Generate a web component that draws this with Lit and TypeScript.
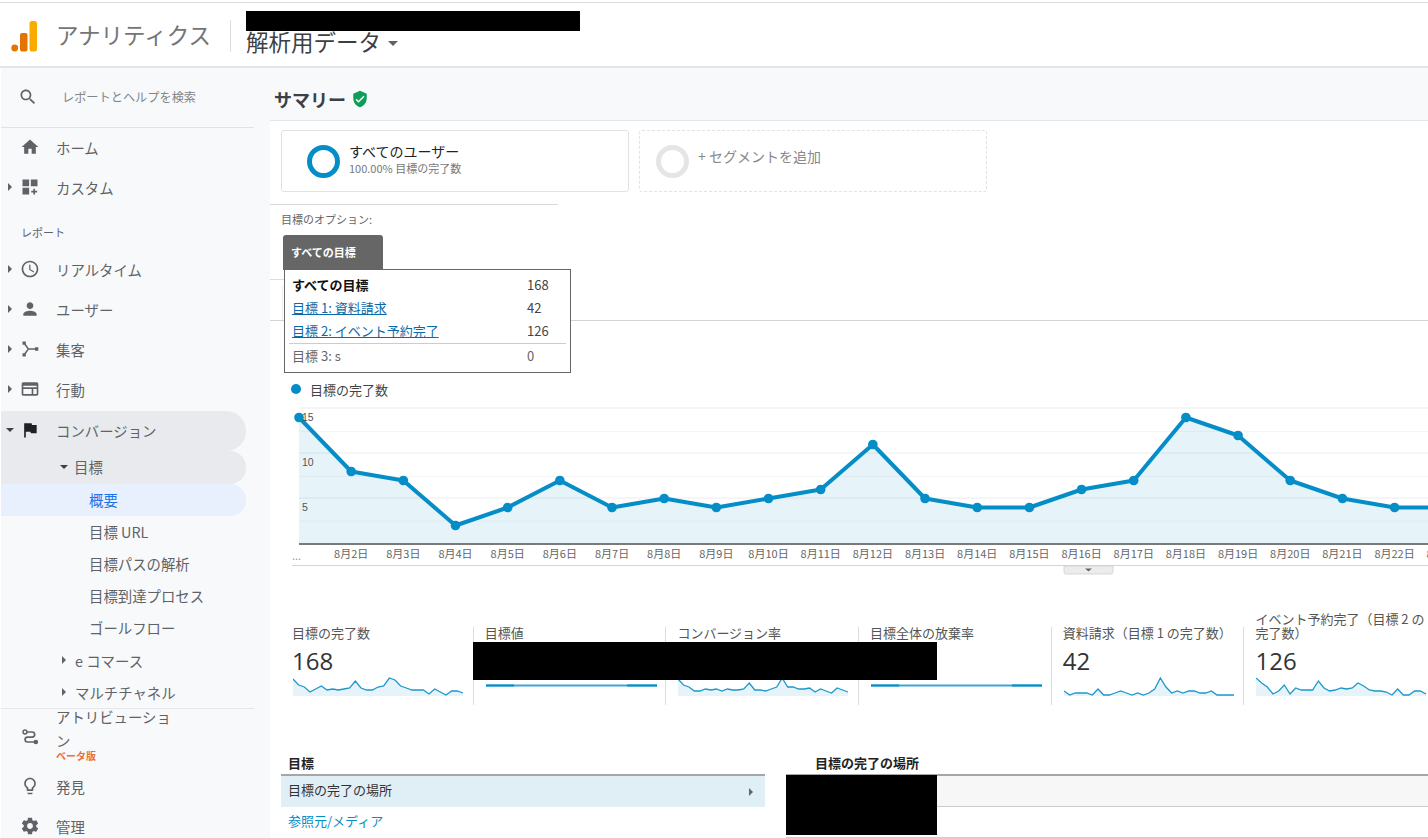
import { LitElement, html, css, svg } from "lit";
import { customElement } from "lit/decorators.js";

const P = {
  search: "M15.5 14h-.79l-.28-.27C15.41 12.59 16 11.11 16 9.5 16 5.91 13.09 3 9.5 3S3 5.91 3 9.5 5.91 16 9.5 16c1.61 0 3.09-.59 4.23-1.57l.27.28v.79l5 4.99L20.49 19l-4.99-5zm-6 0C7.01 14 5 11.99 5 9.5S7.01 5 9.5 5 14 7.01 14 9.5 11.99 14 9.5 14z",
  home: "M10 20v-6h4v6h5v-8h3L12 3 2 12h3v8z",
  custom: "M3 3h8v8H3zM13 3h8v8h-8zM3 13h8v8H3zM16 14h2v2.5h2.5v2H18V21h-2v-2.500h-2.500v-2H16z",
  clock: "M11.99 2C6.47 2 2 6.48 2 12s4.47 10 9.99 10C17.52 22 22 17.52 22 12S17.52 2 11.99 2zM12 20c-4.420 0-8-3.580-8-8s3.580-8 8-8 8 3.580 8 8-3.580 8-8 8zm.5-13H11v6l5.250 3.150.75-1.230-4.500-2.670z",
  person: "M12 12c2.210 0 4-1.790 4-4s-1.790-4-4-4-4 1.790-4 4 1.790 4 4 4zm0 2c-2.670 0-8 1.340-8 4v2h16v-2c0-2.660-5.330-4-8-4z",
  acq: "M3 3h4v4H3zM3 17h4v4H3zM18 10h4v4h-4zM6.500 5.500l4 5.500H18v2h-7.500l-4 5.500-1.600-1.200L9 12 4.900 6.700z",
  behav: "M20 4H4c-1.100 0-2 .9-2 2v12c0 1.100.9 2 2 2h16c1.100 0 2-.9 2-2V6c0-1.100-.9-2-2-2zM4 18v-6h10v6H4zm16 0h-4v-6h4v6zM4 10V8h16v2H4z",
  flag: "M14.400 6L14 4H5v17h2v-7h5.600l.4 2h7V6z",
  bulb: "M9 21c0 .55.45 1 1 1h4c.55 0 1-.45 1-1v-1H9v1zm3-19C8.140 2 5 5.140 5 9c0 2.380 1.190 4.470 3 5.740V17c0 .55.45 1 1 1h6c.55 0 1-.45 1-1v-2.260c1.810-1.270 3-3.360 3-5.740 0-3.860-3.140-7-7-7zm2.850 11.100l-.85.6V16h-4v-2.300l-.85-.6C7.800 12.160 7 10.630 7 9c0-2.760 2.240-5 5-5s5 2.240 5 5c0 1.630-.8 3.160-2.150 4.100z",
  gear: "M19.430 12.980c.04-.32.07-.64.07-.98s-.03-.66-.07-.98l2.110-1.650c.19-.15.24-.42.12-.64l-2-3.460c-.12-.22-.39-.3-.61-.22l-2.490 1c-.52-.4-1.080-.73-1.690-.98l-.38-2.650C14.460 2.180 14.250 2 14 2h-4c-.25 0-.46.18-.49.42l-.38 2.650c-.61.25-1.170.59-1.690.98l-2.490-1c-.23-.09-.49 0-.61.22l-2 3.460c-.13.22-.07.49.12.64l2.110 1.650c-.04.32-.07.65-.07.98s.03.66.07.98l-2.110 1.650c-.19.15-.24.42-.12.64l2 3.460c.12.22.39.3.61.22l2.490-1c.52.4 1.080.73 1.690.98l.38 2.650c.03.24.24.42.49.42h4c.25 0 .46-.18.49-.42l.38-2.650c.61-.25 1.170-.59 1.690-.98l2.490 1c.23.09.49 0 .61-.22l2-3.460c.12-.22.07-.49-.12-.64l-2.110-1.650zM12 15.500c-1.930 0-3.500-1.570-3.500-3.500s1.570-3.500 3.500-3.500 3.500 1.570 3.500 3.500-1.570 3.500-3.500 3.500z",
  shield: "M12 1L3 5v6c0 5.550 3.840 10.740 9 12 5.160-1.260 9-6.450 9-12V5l-9-4zm-2 16l-4-4 1.410-1.410L10 14.170l6.590-6.590L18 9l-8 8z",
};

const icon = (d: string, cls = "ic") => html`<svg class=${cls} viewBox="0 0 24 24"><path d=${d}></path></svg>`;

const attributionIcon = html`<svg class="ic" viewBox="0 0 24 24"><circle cx="6" cy="6" r="2.300" fill="none" stroke="#5f6368" stroke-width="1.800"></circle><circle cx="19" cy="18" r="2.800"></circle><path d="M8.500 6h6a3 3 0 0 1 0 6.200H9a2.900 2.900 0 0 0 0 5.800h8" fill="none" stroke="#5f6368" stroke-width="2"></path></svg>`;

const caretRight = html`<span class="caret right"></span>`;
const caretDown = html`<span class="caret down"></span>`;

const MAIN = [14, 8, 7, 2, 4, 7, 4, 5, 4, 5, 6, 11, 5, 4, 4, 6, 7, 14, 12, 7, 5, 4, 4, 4];
const X0 = 29, STEP = 52.17, BASE = 143.5, UNIT = 9;
const px = (i: number) => X0 + i * STEP;
const py = (v: number) => BASE - v * UNIT;

function mainChart() {
  const pts = MAIN.map((v, i) => `${px(i)},${py(v)}`).join(" ");
  const grid = [8, 31.5, 53, 76.5, 98, 121];
  return html`<svg class="chart" viewBox="0 0 1158 176" width="1158" height="176">
    ${grid.map((y, i) => svg`<line x1="29" x2="1158" y1=${y} y2=${y} stroke=${i % 2 ? "#f6f6f6" : "#ececec"} stroke-width="1"></line>`)}
    <polygon points="${X0},${BASE} ${pts} ${px(23)},${BASE}" fill="#058dc7" fill-opacity="0.1"></polygon>
    <polyline points=${pts} fill="none" stroke="#058dc7" stroke-width="4" stroke-linejoin="round"></polyline>
    ${MAIN.map((v, i) => svg`<circle cx=${px(i)} cy=${py(v)} r="4.800" fill="#058dc7"></circle>`)}
    <rect x="29" y="143" width="1129" height="2" fill="#7a7a7a"></rect>
    <text class="yl" x="32" y="21">15</text>
    <text class="yl" x="32" y="66">10</text>
    <text class="yl" x="32" y="111">5</text>
    <text class="xl dots" x="22" y="160">...</text>
    ${MAIN.slice(1).map((_, i) => svg`<text class="xl" x=${px(i + 1)} y="158" text-anchor="middle">8月${i + 2}日</text>`)}
    <rect x="22" y="165" width="1136" height="1" fill="#d5d5d5"></rect>
    <path d="M794 166h49v6a2 2 0 0 1-2 2h-45a2 2 0 0 1-2-2z" fill="#ececec" stroke="#cfcfcf" stroke-width="0.800"></path>
    <path d="M815 168.500h7l-3.500 3z" fill="#666"></path>
  </svg>`;
}

function spark(ys: number[] | null) {
  if (!ys) {
    return html`<svg class="spark" viewBox="0 0 171 20" width="171" height="20">
      <line x1="0" x2="171" y1="8.500" y2="8.500" stroke="#3fa4d8" stroke-width="2"></line>
      <line x1="0" x2="28" y1="8.500" y2="8.500" stroke="#058dc7" stroke-width="2"></line>
      <line x1="141" x2="171" y1="8.500" y2="8.500" stroke="#058dc7" stroke-width="2"></line>
    </svg>`;
  }
  const d = ys.map((y, i) => `${(i * 170) / (ys.length - 1)},${y + 1}`).join(" ");
  return html`<svg class="spark" viewBox="0 0 171 20" width="171" height="20">
    <polygon points="0,19 ${d} 170,19" fill="#058dc7" fill-opacity="0.1"></polygon>
    <polyline points=${d} fill="none" stroke="#058dc7" stroke-opacity="0.9" stroke-width="1.300"></polyline>
  </svg>`;
}

const S1 = [1, 7, 9, 14, 11, 8, 12, 11, 12, 11, 10, 3, 10, 12, 12, 9, 8, 0, 2, 8, 10, 12, 12, 12, 16, 11, 14, 17, 13, 13, 15];
const S3 = [1, 7, 9, 13, 13, 11, 12, 11, 13, 11, 12, 12, 11, 5, 12, 12, 13, 11, 9, 0, 9, 9, 11, 11, 10, 14, 11, 13, 15, 10, 12, 14];
const S5 = [13, 17, 15, 15, 15, 17, 11, 17, 17, 15, 13, 15, 17, 15, 17, 15, 11, 0, 9, 15, 13, 15, 13, 13, 15, 15, 13, 17, 17, 17, 17];
const S6 = [0, 5, 9, 16, 13, 7, 16, 10, 12, 12, 12, 3, 10, 13, 12, 10, 11, 10, 5, 8, 12, 13, 13, 14, 17, 11, 17, 17, 13, 13, 16];

const CARDS: { title: string; value?: string; ys: number[] | null }[] = [
  { title: "目標の完了数", value: "168", ys: S1 },
  { title: "目標値", ys: null },
  { title: "コンバージョン率", ys: S3 },
  { title: "目標全体の放棄率", ys: null },
  { title: "資料請求（目標 1 の完了数）", value: "42", ys: S5 },
  { title: "イベント予約完了（目標 2 の完了数）", value: "126", ys: S6 },
];

@customElement("app-root")
export class AppRoot extends LitElement {
  static styles = css`
    :host {
      display: block;
      width: 1428px;
      height: 838px;
      overflow: hidden;
      position: relative;
      background: #fff;
      font-family: "Noto Sans CJK JP", "Noto Sans", sans-serif;
      color: #333;
    }
    .redact { position: absolute; background: #000; }
    .r1 { left: 246px; top: 11px; width: 334px; height: 20px; }
    .r2 { left: 473px; top: 642px; width: 464px; height: 38px; }
    .r3 { left: 786px; top: 775px; width: 151px; height: 60px; }

    header {
      height: 66px;
      box-sizing: border-box;
      border-top: 1px solid #dcdcdc;
      border-bottom: 2px solid #e3e5e8;
      margin-top: 2px;
      display: flex;
      align-items: center;
      background: #fff;
    }
    .logo { width: 30px; height: 34px; margin-left: 9px; margin-top: 2px; flex: none; }
    .brand { font-size: 22.500px; color: #757575; margin-left: 17px; line-height: 30px; margin-top: -2px; width: 157px; white-space: nowrap; flex: none; }
    .vr { width: 1px; height: 32px; background: #dadce0; margin-left: 17px; margin-top: 2px; }
    .prop { font-size: 22.500px; color: #3c4043; margin-left: 15px; margin-top: 13px; line-height: 30px; display: flex; align-items: center; }
    .prop .tri { width: 0; height: 0; border: 5px solid transparent; border-top: 5px solid #5f6368; border-bottom: 0; margin-left: 7px; margin-top: 4px; }

    .body { display: flex; height: 770px; }
    aside { width: 270px; flex: none; box-sizing: border-box; border-left: 1px solid #fff; background: #f8f9fb; overflow: hidden; }
    .search { height: 60px; width: 253px; box-sizing: border-box; border-bottom: 1px solid #e0e2e5; display: flex; align-items: center; padding-left: 17px; font-size: 12.200px; color: #80868b; padding-bottom: 1px; }
    .search .ic { width: 20px; height: 20px; fill: #5f6368; margin-right: 24px; }
    .nav { display: flex; align-items: center; height: 40px; font-size: 14.400px; color: #5f6368; width: 245px; box-sizing: border-box; padding: 0 0 2px 5px; }
    .nav .cw { width: 14px; flex: none; display: flex; align-items: center; }
    .ic { width: 20px; height: 20px; fill: #5f6368; flex: none; margin-right: 16px; }
    .label { height: 42px; display: flex; align-items: center; padding-left: 20px; font-size: 11px; color: #5f6368; padding-top: 6px; box-sizing: border-box; }
    .caret { display: block; width: 0; height: 0; border-style: solid; border-color: transparent; }
    .caret.right { border-width: 4px 0 4px 4px; border-left-color: #5f6368; margin-left: 2px; }
    .caret.down { border-width: 4px 4px 0 4px; border-top-color: #3c4043; }
    .conv { background: #e8eaed; border-radius: 0 20px 20px 0; margin-top: 1px; }
    .conv .ic { fill: #202124; }
    .sub { display: flex; align-items: center; height: 32px; width: 245px; box-sizing: border-box; padding: 0 0 2px 88px; font-size: 14.400px; color: #5f6368; }
    .sub.mid { padding-left: 59px; }
    .sub.mid .caret { margin-right: 6px; }
    .sub.mid .caret.right { margin-left: 2px; margin-right: 9px; }
    .sub.goal { background: #e8eaed; border-radius: 0 16px 16px 0; height: 33px; }
    .sub.first { margin-top: 1px; }
    .sub.on { background: #e8f0fe; color: #1a73e8; border-radius: 0 16px 16px 0; }
    .rule { height: 1px; width: 253px; background: #e6e7ea; margin-top: -1px; }
    .nav.attr { height: 58px; align-items: center; }
    .attr-text { width: 120px; line-height: 24px; margin-bottom: 9px; }
    .beta { display: block; font-size: 10px; line-height: 10px; color: #e8703a; font-weight: 700; margin-top: -2px; }

    main { flex: 1; min-width: 0; overflow: hidden; position: relative; }
    .title { height: 53px; box-sizing: border-box; border-bottom: 1px solid #e3e5e8; background: #f8f9fb; display: flex; align-items: center; padding-left: 4px; font-size: 18px; font-weight: 700; color: #3c4043; padding-top: 9px; }
    .title svg { width: 18px; height: 18px; fill: #0f9d58; margin-left: 5px; }
    .segs { display: flex; gap: 10px; padding: 9px 0 0 11px; height: 83px; box-sizing: border-box; }
    .seg { width: 348px; height: 62px; box-sizing: border-box; border: 1px solid #e2e2e2; border-radius: 3px; display: flex; align-items: center; padding-left: 25px; }
    .seg.add { border: 1px dashed #e2e2e2; padding-left: 16px; }
    .ring { width: 33px; height: 33px; box-sizing: border-box; border: 5px solid #058dc7; border-radius: 50%; flex: none; margin-right: 9px; }
    .seg.add .ring { border-color: #e5e5e5; margin-right: 9px; }
    .seg-t { font-size: 14px; line-height: 18px; color: #222; }
    .seg-s { font-size: 11px; line-height: 16px; color: #777; }
    .seg-info { margin-top: -4px; }
    .seg-add { font-size: 14px; color: #888; margin-top: -11px; }

    .opt { width: 288px; height: 116px; box-sizing: border-box; border-top: 1px solid #d8d8d8; padding: 7px 0 0 11px; font-size: 11px; line-height: 14px; color: #666; position: relative; }
    .tab { position: absolute; left: 13px; top: 30px; width: 100px; height: 35px; box-sizing: border-box; background: #666; border-radius: 3px 3px 0 0; color: #fff; font-size: 11px; font-weight: 700; padding: 10px 0 0 8px; }
    .lines { height: 0; position: relative; }
    .tline { position: absolute; left: 0; top: -41px; width: 14px; height: 1px; background: #ddd; }
    .tbox { position: absolute; left: 12px; top: -34px; width: 1px; height: 34px; background: #eee; }
    .hline { height: 1px; background: #d4d4d4; }
    .pop { position: absolute; left: 14px; top: 201px; width: 287px; height: 104px; box-sizing: border-box; background: #fff; border: 1px solid #666; padding: 3px 4px; font-size: 13px; }
    .pr { display: flex; height: 23px; align-items: center; justify-content: space-between; padding: 0 0 0 3px; }
    .pr span:last-child { width: 39px; flex: none; color: #444; }
    .pr a { color: #0a6ba8; text-decoration: underline; }
    .pr.b { font-weight: 700; color: #111; }
    .pr.b span:last-child { font-weight: 400; }
    .pr.g { color: #666; border-top: 1px solid #ccc; margin-top: 1px; height: 22px; }
    .pr.g span:last-child { color: #666; }

    .legend { height: 79px; box-sizing: border-box; padding: 57px 0 0 21px; display: flex; align-items: center; font-size: 13px; color: #444; }
    .legend i { width: 10px; height: 10px; border-radius: 50%; background: #058dc7; margin-right: 9px; }
    .chart { display: block; }
    .chart .yl { font: 10.500px "Liberation Sans", sans-serif; fill: #555; }
    .chart .xl { font: 11px "Noto Sans CJK JP", sans-serif; fill: #666; }
    .chart .dots { fill: #999; }

    .cards { display: flex; margin: 51px 0 0 11px; width: 1200px; height: 78px; }
    .card { width: 192.700px; flex: none; box-sizing: border-box; padding-left: 11px; border-right: 1px solid #ddd; }
    .card:last-child { border-right: 0; }
    .card-t { height: 13px; display: flex; flex-direction: column; justify-content: flex-end; font-size: 13px; line-height: 14px; color: #555; width: 176px; }
    .card-v { height: 37px; font: 24px/36px "Open Sans", sans-serif; color: #333; padding-top: 3px; box-sizing: border-box; }
    .card .spark { display: block; margin-left: 1px; }

    .tables { display: flex; margin-top: 50px; }
    .tleft { width: 484px; margin-left: 11px; flex: none; font-size: 13px; }
    .tright { flex: 1; margin-left: 21px; font-size: 13px; }
    .th { height: 19px; box-sizing: border-box; padding: 1px 0 0 7px; font-weight: 700; color: #222; line-height: 14px; }
    .tright .th { padding-left: 29px; }
    .rows { border-top: 2px solid #a6a6a6; }
    .row { height: 31px; box-sizing: border-box; padding: 0 12px 5px 7px; display: flex; align-items: center; justify-content: space-between; color: #333; background: #e0eef5; }
    .row i { width: 0; height: 0; border: 4px solid transparent; border-left: 4px solid #666; border-right: 0; margin-top: 5px; }
    .lnk { height: 30px; box-sizing: border-box; padding: 0 0 3px 7px; display: flex; align-items: center; color: #058dc7; }
    .rrow { height: 30px; background: #f7f7f7; border-bottom: 1px solid #ccc; }
    .rrow.w { background: #fff; border-bottom: 1px solid #ccc; }
  `;

  render() {
    return html`
      <header>
        <svg class="logo" viewBox="0 0 30 34">
          <circle cx="5.700" cy="29" r="3.400" fill="#e37400"></circle>
          <rect x="11" y="14" width="7.500" height="18.500" rx="2" fill="#e37400"></rect>
          <rect x="20.500" y="2" width="7.500" height="30.500" rx="2.500" fill="#f9ab00"></rect>
        </svg>
        <div class="brand">アナリティクス</div>
        <div class="vr"></div>
        <div class="prop">解析用データ<span class="tri"></span></div>
      </header>
      <div class="body">
        <aside>
          <div class="search">${icon(P.search)}レポートとヘルプを検索</div>
          <div class="nav"><span class="cw"></span>${icon(P.home)}ホーム</div>
          <div class="nav"><span class="cw">${caretRight}</span>${icon(P.custom)}カスタム</div>
          <div class="label">レポート</div>
          <div class="nav"><span class="cw">${caretRight}</span>${icon(P.clock)}リアルタイム</div>
          <div class="nav"><span class="cw">${caretRight}</span>${icon(P.person)}ユーザー</div>
          <div class="nav"><span class="cw">${caretRight}</span>${icon(P.acq)}集客</div>
          <div class="nav"><span class="cw">${caretRight}</span>${icon(P.behav)}行動</div>
          <div class="nav conv"><span class="cw">${caretDown}</span>${icon(P.flag)}コンバージョン</div>
          <div class="sub mid goal">${caretDown}目標</div>
          <div class="sub on">概要</div>
          <div class="sub">目標 URL</div>
          <div class="sub">目標パスの解析</div>
          <div class="sub">目標到達プロセス</div>
          <div class="sub">ゴールフロー</div>
          <div class="sub mid first">${caretRight}e コマース</div>
          <div class="sub mid">${caretRight}マルチチャネル</div>
          <div class="rule"></div>
          <div class="nav attr"><span class="cw"></span>${attributionIcon}<div class="attr-text">アトリビューション<span class="beta">ベータ版</span></div></div>
          <div class="nav"><span class="cw"></span>${icon(P.bulb)}発見</div>
          <div class="nav"><span class="cw"></span>${icon(P.gear)}管理</div>
        </aside>
        <main>
          <div class="title">サマリー${icon(P.shield, "")}</div>
          <div class="segs">
            <div class="seg"><div class="ring"></div><div class="seg-info"><div class="seg-t">すべてのユーザー</div><div class="seg-s">100.00% 目標の完了数</div></div></div>
            <div class="seg add"><div class="ring"></div><div class="seg-add">+ セグメントを追加</div></div>
          </div>
          <div class="opt">目標のオプション:<div class="tab">すべての目標</div></div>
          <div class="lines"><div class="tline"></div><div class="tbox"></div></div>
          <div class="hline"></div>
          <div class="legend"><i></i>目標の完了数</div>
          ${mainChart()}
          <div class="cards">
            ${CARDS.map(
              (c) => html`<div class="card">
                <div class="card-t"><div>${c.title}</div></div>
                <div class="card-v">${c.value ?? ""}</div>
                ${spark(c.ys)}
              </div>`
            )}
          </div>
          <div class="tables">
            <div class="tleft">
              <div class="th">目標</div>
              <div class="rows"><div class="row">目標の完了の場所<i></i></div><div class="lnk">参照元/メディア</div></div>
            </div>
            <div class="tright">
              <div class="th">目標の完了の場所</div>
              <div class="rows"><div class="rrow"></div><div class="rrow w"></div></div>
            </div>
          </div>
          <div class="pop">
            <div class="pr b"><span>すべての目標</span><span>168</span></div>
            <div class="pr"><span><a>目標 1: 資料請求</a></span><span>42</span></div>
            <div class="pr"><span><a>目標 2: イベント予約完了</a></span><span>126</span></div>
            <div class="pr g"><span>目標 3: s</span><span>0</span></div>
          </div>
        </main>
      </div>
      <div class="redact r1"></div>
      <div class="redact r2"></div>
      <div class="redact r3"></div>
    `;
  }
}
